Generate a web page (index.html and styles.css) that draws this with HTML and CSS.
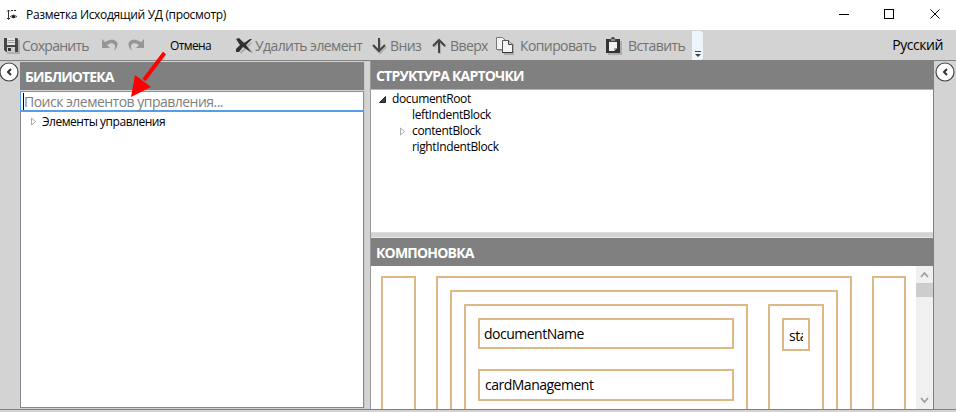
FILE: index.html
```html
<!DOCTYPE html>
<html lang="ru">
<head>
<meta charset="utf-8">
<title>Разметка Исходящий УД (просмотр)</title>
<link rel="stylesheet" href="styles.css">
</head>
<body>
<div class="window">
  <header class="titlebar">
    <svg class="app-icon" width="12" height="12" viewBox="0 0 12 12"><path d="M2.500 1v9M1 2.500l1.500-1.500 1.500 1.500M1 9l1.500 1.500L4 9" fill="none" stroke="#333"/><path d="M5 1.500h6" stroke="#222" stroke-dasharray="2 1"/><path d="M4 7.500q3.500-3 7 0q-3.500 3-7 0z" fill="none" stroke="#444" stroke-width=".8"/><circle cx="7.500" cy="7.500" r="1.500" fill="#111"/></svg>
    <span class="caption">Разметка Исходящий УД (просмотр)</span>
    <svg class="controls" width="118" height="30" viewBox="0 0 118 30" fill="none" stroke="#000"><path d="M8 14.500h10M53.500 9.500h9v9h-9z" shape-rendering="crispEdges"/><path d="M99.500 9.500l9 9M108.500 9.500l-9 9"/></svg>
  </header>
  <nav class="toolbar">
    <div class="tool save"><svg width="20" height="20" viewBox="0 0 20 20"><path class="shade" d="M4 3h14v14H5z"/><path d="M2 1h13l1 1v13H4l-2-2z" fill="#464646"/><path d="M5 1h8v7H5z" fill="#e4e4e4"/><path d="M5.500 3.500h7M5.500 5.500h7" stroke="#999"/><path d="M5 10h8v5H5z" fill="#ccc"/><path d="M6 11h3v3H6z" fill="#333"/></svg><span>Сохранить</span></div>
    <svg class="undo" width="18" height="16" viewBox="0 0 18 16"><path d="M1 2v9h8L6 8q4-3 7-1 2 2 0 7 5-5 3-9Q12 0 4 5z" fill="#969696"/></svg>
    <svg class="redo" width="18" height="16" viewBox="0 0 18 16"><path d="M17 2v9H9l3-3Q8 5 5 7q-2 2 0 7-5-5-3-9 4-5 12 0z" fill="#969696"/></svg>
    <span class="cancel">Отмена</span>
    <div class="tool remove"><svg width="20" height="20" viewBox="0 0 20 20"><path class="shade" d="M4 5l12 11 2-1L8 4zM6 17L18 5l-3 1L5 15z"/><path d="M1 2l3-1 5 5 6-4 2 0-6 6 5 7-2-1-6-4-4 5-3 0 0-3 4-4z" fill="#303030"/></svg><span>Удалить элемент</span></div>
    <div class="tool down"><svg width="18" height="20" viewBox="0 0 18 20"><path class="shade-line" d="M9 3v13M3 10l6 6 6-6"/><path class="arrow-line" d="M8 1v13M2 8l6 6 6-6"/></svg><span>Вниз</span></div>
    <div class="tool up"><svg width="18" height="20" viewBox="0 0 18 20"><path class="shade-line" d="M9 17V4M3 10l6-6 6 6"/><path class="arrow-line" d="M8 16V3M2 9l6-6 6 6"/></svg><span>Вверх</span></div>
    <div class="tool copy"><svg width="20" height="20" viewBox="0 0 20 20"><path class="shade" d="M3 3h7l8 4v11H8v-4H2z"/><path d="M.5 .5h6l3 3v9h-9z" fill="#f4f4f4" stroke="#777"/><path d="M6.500 3.500h6l4 4v8h-10z" fill="#f4f4f4" stroke="#555"/><path d="M12.500 3.500v4h4" fill="#ccc" stroke="#444"/><path d="M6 15.500h11" stroke="#333"/></svg><span>Копировать</span></div>
    <div class="tool paste"><svg width="20" height="20" viewBox="0 0 20 20"><path class="shade" d="M3 4h14v14H3z"/><path d="M1 2h14v14H1z" fill="#333"/><path d="M4 4h8v7l-3 3H4z" fill="#f2f2f2"/><path d="M9 14v-3h3z" fill="#aaa"/><path d="M4 2h2q0-2 2-2t2 2h2v3H4z" fill="#444"/><path d="M6 3h4" stroke="#ddd"/></svg><span>Вставить</span></div>
    <div class="overflow"><svg width="12" height="28" viewBox="0 0 12 28"><path d="M3 20.500h6" stroke="#444"/><path d="M3 23h6l-3 3z" fill="#444"/></svg></div>
    <span class="language">Русский</span>
  </nav>
  <main class="workspace">
    <aside class="rail"><svg class="toggle" width="20" height="20" viewBox="0 0 20 20"><circle cx="10" cy="10" r="9" fill="#fff" stroke="#444" stroke-width="1.200"/><path d="M12 7l-3 3 3 3" fill="none" stroke="#333" stroke-width="2"/></svg></aside>
    <section class="library">
      <h2 class="heading"><span class="h-lib">БИБЛИОТЕКА</span></h2>
      <div class="search"><i class="caret"></i><span>Поиск элементов управления...</span></div>
      <div class="library-tree"><svg width="7" height="9" viewBox="0 0 7 9"><path class="closed" d="M1.500 1v7l4-3.500z"/></svg><span>Элементы управления</span></div>
    </section>
    <div class="splitter"></div>
    <section class="editor">
      <h2 class="heading"><span class="h-structure">СТРУКТУРА КАРТОЧКИ</span></h2>
      <div class="structure-tree">
        <div class="node"><svg width="7" height="7" viewBox="0 0 7 7"><path d="M6.500 .5v6h-6z" fill="#404040" stroke="#262626"/></svg><span>documentRoot</span></div>
        <div class="node child"><span>leftIndentBlock</span></div>
        <div class="node child"><svg width="7" height="9" viewBox="0 0 7 9"><path class="closed" d="M1.500 1v7l4-3.500z"/></svg><span>contentBlock</span></div>
        <div class="node child"><span>rightIndentBlock</span></div>
      </div>
      <div class="row-splitter"></div>
      <h2 class="heading"><span class="h-layout">КОМПОНОВКА</span></h2>
      <div class="layout">
        <div class="canvas">
          <div class="block side-left"></div>
          <div class="block content"><div class="block inner">
            <div class="block fields"><div class="block field name"><span>documentName</span></div><div class="block field manage"><span>cardManagement</span></div></div>
            <div class="block status"><div class="block state"><span>sta</span></div></div>
          </div></div>
          <div class="block side-right"></div>
        </div>
        <div class="scrollbar"><svg width="17" height="17" viewBox="0 0 17 17"><path d="M5 11l3.500-4 3.500 4"/></svg><div class="thumb"></div><svg class="scroll-down" width="17" height="17" viewBox="0 0 17 17"><path d="M5 6l3.500 4L12 6"/></svg></div>
      </div>
    </section>
    <aside class="rail rail-right"><svg class="toggle" width="20" height="20" viewBox="0 0 20 20"><circle cx="10" cy="10" r="9" fill="#fff" stroke="#444" stroke-width="1.200"/><path d="M12 7l-3 3 3 3" fill="none" stroke="#333" stroke-width="2"/></svg></aside>
  </main>
  <svg class="pointer" width="40" height="50" viewBox="0 0 40 50"><path d="M33.500 3L13 30" stroke="#f00" stroke-width="4"/><path d="M0 47L4 25 20 37z" fill="#f00"/></svg>
</div>
</body>
</html>
```
FILE: styles.css
```css
* { box-sizing: border-box; }
body { margin: 0; overflow: hidden; }
svg { display: block; flex: none; }
span { white-space: nowrap; flex: none; }
.window { position: relative; width: 956px; height: 412px; display: flex; flex-direction: column; background: #d3d3d3; font: 12px/16px "Open Sans", "Noto Sans", sans-serif; color: #000; }
.titlebar { height: 30px; flex: none; background: #fff; display: flex; }
.app-icon { margin: 9px 8px 0 6px; }
.caption { line-height: 30px; letter-spacing: -.33px; }
.controls { margin-left: auto; margin-right: 7px; }
.toolbar { height: 31px; flex: none; display: flex; border-bottom: 1px solid #808080; }
.tool { display: flex; font-size: 14px; line-height: 32px; color: #727272; letter-spacing: -.6px; flex: none; }
.tool svg { margin-top: 7px; }
.shade { fill: #666; opacity: .35; }
.shade-line { fill: none; stroke: #888; stroke-width: 2; opacity: .45; }
.arrow-line { fill: none; stroke: #444; stroke-width: 2; }
.save { width: 101px; padding-left: 2px; }
.save span { letter-spacing: -.75px; }
.undo, .redo { margin-top: 7px; }
.undo { margin-right: 8px; }
.cancel { width: 65px; margin-left: 25px; line-height: 31px; letter-spacing: -.6px; }
.remove { width: 136px; }
.down { width: 60px; }
.up { width: 65px; }
.copy { width: 109px; }
.paste { width: 87px; }
.down svg, .up svg { margin-right: 1px; }
.copy svg { margin-right: 4px; }
.paste svg { margin-right: 3px; }
.overflow { width: 11px; height: 29px; margin-top: 1px; background: #eff5fc; border-radius: 0 3px 3px 0; flex: none; }
.language { margin-left: auto; margin-right: 13px; font-size: 14px; line-height: 30px; letter-spacing: -.45px; }
.workspace { height: 349px; flex: none; display: flex; border-bottom: 1px solid #808080; }
.rail { width: 20px; flex: none; }
.toggle { margin-top: 1px; margin-left: -1px; }
.rail-right { width: 23px; border-left: 1px solid #808080; }
.rail-right .toggle { margin-left: 1px; }
.library { width: 344px; display: flex; flex-direction: column; padding: 1px 0; flex: none; }
.heading { margin: 0; height: 28px; flex: none; padding-left: 5px; background: #808080; color: #fff; font-size: 14px; line-height: 30px; font-weight: 700; display: flex; letter-spacing: -.8px; }
.h-lib { letter-spacing: -.9px; }
.search { height: 21px; margin-top: 1px; flex: none; border: 1px solid #569de5; border-bottom-width: 2px; background: #fff; display: flex; color: #808080; font-size: 14px; line-height: 20px; letter-spacing: -.52px; }
.caret { width: 1px; height: 17px; margin: 1px 0 0 2px; background: #000; }
.library-tree { flex: 1; border: 1px solid #828790; border-top: 0; background: #fff; display: flex; line-height: 20px; padding-left: 9px; gap: 5px; letter-spacing: -.47px; }
.library-tree svg { margin-top: 5px; }
.closed { fill: #fff; stroke: #aaa; }
.splitter { width: 7px; flex: none; border-right: 1px solid #999; border-left: 1px solid #c8c8c8; }
.editor { width: 562px; flex: none; display: flex; flex-direction: column; }
.editor .heading { line-height: 29px; }
.structure-tree { height: 143px; flex: none; background: #fff; border-top: 1px solid #b4b4b4; padding: 1px 0 0 8px; }
.node { height: 16px; display: flex; align-items: center; letter-spacing: -.37px; }
.node svg { margin-right: 6px; }
.child { padding-left: 33px; }
.child svg { margin-left: -13px; margin-right: 6px; }
.row-splitter { height: 6px; flex: none; border-top: 1px solid #dedede; border-bottom: 1px solid #e8e8e8; }
.layout { flex: 1; min-height: 0; background: #fff; display: flex; overflow: hidden; }
.canvas { width: 545px; height: 220px; padding: 10px; display: flex; gap: 20px; }
.block { border: 2px solid #deb887; flex: none; }
.side-left { width: 35px; }
.content { width: 416px; padding: 12px; }
.inner { width: 388px; height: 300px; padding: 12px; display: flex; gap: 20px; }
.fields { width: 284px; padding: 12px; }
.field { width: 256px; font-size: 14px; display: flex; align-items: center; padding-left: 4px; letter-spacing: -.5px; }
.name { height: 31px; margin-bottom: 20px; }
.manage { height: 32px; padding-left: 5px; }
.status { width: 56px; padding: 12px; }
.state { width: 28px; height: 33px; padding: 6px 5px; font-size: 14px; display: flex; letter-spacing: -.4px; }
.state span { width: 14px; overflow: hidden; line-height: 19px; }
.side-right { width: 34px; }
.scrollbar { width: 17px; background: #f0f0f0; display: flex; flex-direction: column; flex: none; }
.scrollbar path { fill: none; stroke: #999; stroke-width: 1.5; }
.thumb { height: 14px; background: #cdcdcd; }
.scroll-down { margin-top: auto; }
.pointer { position: absolute; left: 131px; top: 50px; }
```
